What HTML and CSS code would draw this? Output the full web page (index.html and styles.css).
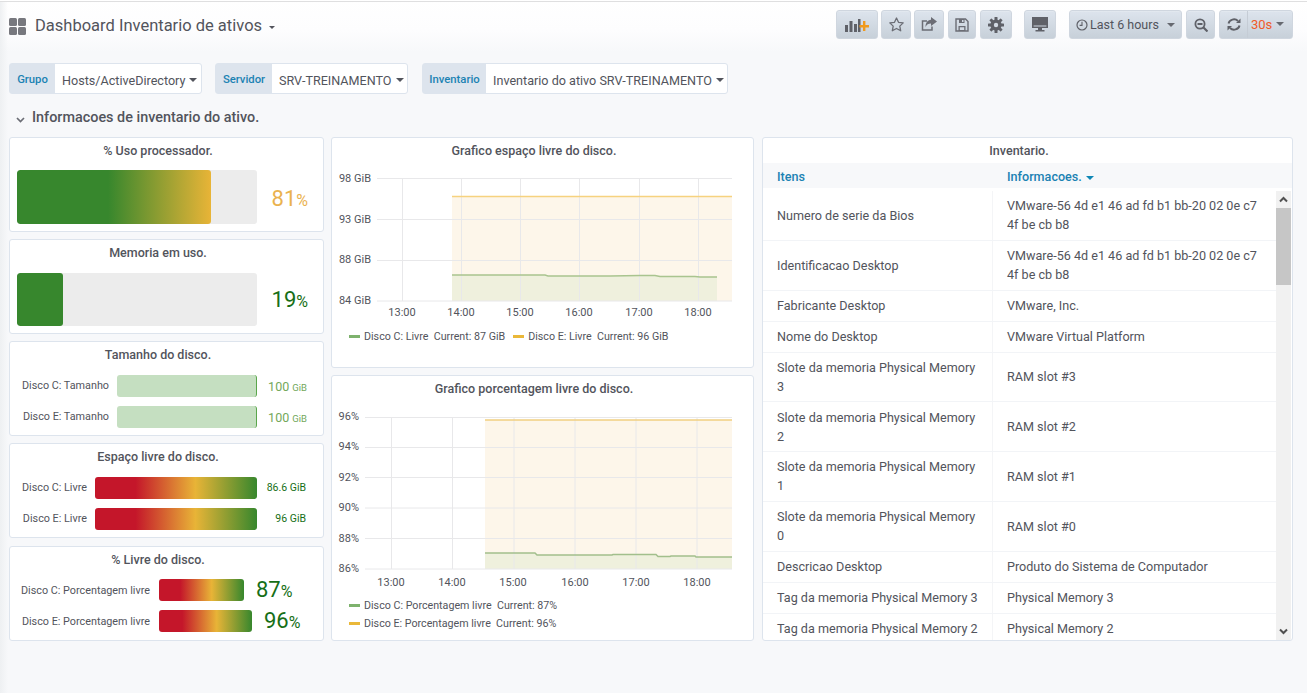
FILE: index.html
```html
<!DOCTYPE html>
<html lang="pt">
<head>
<meta charset="utf-8">
<title>Dashboard Inventario de ativos</title>
<link rel="stylesheet" href="styles.css">
</head>
<body>
<header class="navbar">
  <div class="nav-title">
    <svg class="grid-icon" width="17" height="17" viewBox="0 0 17 17"><rect width="8" height="8" rx="1.5"/><rect x="9" width="8" height="8" rx="1.5"/><rect y="9" width="8" height="8" rx="1.5"/><rect x="9" y="9" width="8" height="8" rx="1.5"/></svg>
    <span class="dash-name">Dashboard Inventario de ativos</span>
    <span class="caret caret-title"></span>
  </div>
  <div class="nav-buttons">
    <button class="btn w42"><svg width="24" height="14" viewBox="0 0 24 14"><path fill="#5f6168" d="M0 7h3v7H0zM4.500 3h3v11h-3zM9 6h3v8H9zM13 1h2.500v13H13z"/><path fill="#f09a1e" d="M18 3h2.400v4H24v2.400h-3.600V13H18V9.400h-3.500V7H18z"/></svg></button>
    <button class="btn w30 ml3"><svg width="15" height="15" viewBox="0 0 15 15"><path fill="none" stroke="#6b6d75" stroke-width="1.300" stroke-linejoin="round" d="M7.500 1l2 4.300 4.700.6-3.400 3.200.9 4.700-4.200-2.300-4.200 2.300.9-4.700L.8 5.900l4.700-.6z"/></svg></button>
    <button class="btn w30 ml3"><svg width="16" height="15" viewBox="0 0 16 15"><path fill="none" stroke="#6b6d75" stroke-width="1.500" d="M11 9.500V13H1.500V4H6"/><path fill="#6b6d75" d="M10 0l6 4.500-6 4.500V6.500C7.500 6.500 5.500 7.500 4.500 10 4.500 6 6.500 3 10 2.800z"/></svg></button>
    <button class="btn w28 ml4"><svg width="14" height="14" viewBox="0 0 14 14"><path fill="none" stroke="#6b6d75" stroke-width="1.400" d="M1 1h9.500L13 3.500V13H1z"/><path fill="#6b6d75" d="M4 1h5.500v4H4zM3.500 8h7v5h-7z"/><path fill="#d3dae3" d="M7 2h1.500v2H7zM4.800 9.200h4.400v2.800H4.800z"/></svg></button>
    <button class="btn w32 ml4"><svg width="16" height="16" viewBox="0 0 16 16"><g fill="#5f6168"><circle cx="8" cy="8" r="5.600"/><rect x="6.500" width="3" height="16" rx=".6"/><rect x="6.500" width="3" height="16" rx=".6" transform="rotate(45 8 8)"/><rect x="6.500" width="3" height="16" rx=".6" transform="rotate(90 8 8)"/><rect x="6.500" width="3" height="16" rx=".6" transform="rotate(135 8 8)"/></g><circle cx="8" cy="8" r="2.200" fill="#d3dae3"/></svg></button>
    <button class="btn w32 ml12"><svg width="16" height="15" viewBox="0 0 16 15"><path fill="none" stroke="#5f6168" stroke-width="1.600" d="M.8 .8h14.400v9.400H.8z"/><path fill="#5f6168" d="M1 1h14v7.500H1zM6 11h4v2h2.500v1.500h-9V13H6z"/></svg></button>
    <button class="btn time ml13"><svg width="12" height="12" viewBox="0 0 12 12"><circle cx="6" cy="6" r="5" fill="none" stroke="#5f6168" stroke-width="1.200"/><path fill="none" stroke="#5f6168" stroke-width="1.100" d="M6 2.800V6.400H3.600"/></svg><span class="time-text">Last 6 hours</span><span class="caret caret-btn"></span></button>
    <button class="btn w29 ml4"><svg width="14" height="14" viewBox="0 0 14 14"><circle cx="6" cy="6" r="4.600" fill="none" stroke="#5f6168" stroke-width="1.800"/><path stroke="#5f6168" stroke-width="2.200" d="M9.500 9.500l4 4M3.500 6h5" fill="none"/></svg></button>
    <div class="btn refresh ml4">
      <span class="refresh-icon"><svg width="14" height="13" viewBox="0 0 14 13"><path fill="none" stroke="#5f6168" stroke-width="1.900" d="M1.500 5.500A5.500 5 0 0 1 11 3M12.500 7.500A5.500 5 0 0 1 3 10"/><path fill="#5f6168" d="M13.500 .5v4.500H9zM.5 12.500V8H5z"/></svg></span>
      <span class="interval">30s</span><span class="caret caret-btn caret-int"></span>
    </div>
  </div>
</header>

<section class="vars">
  <div class="var var-grupo"><span class="var-label">Grupo</span><span class="var-value">Hosts/ActiveDirectory<span class="caret"></span></span></div>
  <div class="var var-servidor"><span class="var-label">Servidor</span><span class="var-value">SRV-TREINAMENTO<span class="caret"></span></span></div>
  <div class="var var-inv"><span class="var-label">Inventario</span><span class="var-value">Inventario do ativo SRV-TREINAMENTO<span class="caret"></span></span></div>
</section>

<h2 class="row-title"><svg width="9" height="6" viewBox="0 0 9 6"><path fill="none" stroke="#6b6d75" stroke-width="1.700" d="M1 1l3.500 3.500L8 1"/></svg>Informacoes de inventario do ativo.</h2>

<main class="grid">
  <div class="col-left">
    <article class="panel p95">
      <h3 class="panel-title">% Uso processador.</h3>
      <div class="gauge-row">
        <div class="track tall"><div class="fill grad-cpu"></div></div>
        <div class="big orange">81<small>%</small></div>
      </div>
    </article>
    <article class="panel p95">
      <h3 class="panel-title">Memoria em uso.</h3>
      <div class="gauge-row gauge-mem">
        <div class="track tall mem"><div class="fill fill-mem"></div></div>
        <div class="big green">19<small>%</small></div>
      </div>
    </article>
    <article class="panel p95">
      <h3 class="panel-title">Tamanho do disco.</h3>
      <div class="bars size">
        <div class="bar-row"><span class="bar-label">Disco C: Tamanho</span><div class="bar bar-size"></div><span class="bar-val lgreen">100 <small>GiB</small></span></div>
        <div class="bar-row"><span class="bar-label">Disco E: Tamanho</span><div class="bar bar-size"></div><span class="bar-val lgreen">100 <small>GiB</small></span></div>
      </div>
    </article>
    <article class="panel p95">
      <h3 class="panel-title">Espaço livre do disco.</h3>
      <div class="bars free">
        <div class="bar-row"><span class="bar-label">Disco C: Livre</span><div class="bar grad-free"></div><span class="bar-val dgreen">86.6 <small>GiB</small></span></div>
        <div class="bar-row"><span class="bar-label">Disco E: Livre</span><div class="bar grad-free"></div><span class="bar-val dgreen">96 <small>GiB</small></span></div>
      </div>
    </article>
    <article class="panel p95 last">
      <h3 class="panel-title">% Livre do disco.</h3>
      <div class="bars pct">
        <div class="bar-row"><span class="bar-label">Disco C: Porcentagem livre</span><div class="bar grad-free b85"></div><span class="pct-val green">87<small>%</small></span></div>
        <div class="bar-row"><span class="bar-label">Disco E: Porcentagem livre</span><div class="bar grad-free b93"></div><span class="pct-val green">96<small>%</small></span></div>
      </div>
    </article>
  </div>

  <div class="col-mid">
    <article class="panel chart1">
      <h3 class="panel-title">Grafico espaço livre do disco.</h3>
      <svg class="chart c1" viewBox="331 163 423 155" width="423" height="155">
        <rect x="452" y="196" width="280" height="105" fill="#fdf6ea"/>
        <path d="M452 301V275H545L548 276H610L640 275.500H655L660 276.500H695L700 277H717V301Z" fill="#eff0dd"/>
        <g class="gl">
          <path d="M377 178.500H732M377 219.500H732M377 260.500H732M377 301H732M402.500 178V301M461.500 178V301M520.500 178V301M579.500 178V301M639.500 178V301M698.500 178V301"/>
        </g>
        <path d="M452 196.500H732" stroke="#f6d27f" stroke-width="1.500" fill="none"/>
        <path d="M452 275H545L548 276H610L640 275.500H655L660 276.500H695L700 277H717" stroke="#a9c48f" stroke-width="1.500" fill="none"/>
        <g class="ylab"><text x="371" y="182">98 GiB</text><text x="371" y="223">93 GiB</text><text x="371" y="263">88 GiB</text><text x="371" y="304">84 GiB</text></g>
        <g class="xlab"><text x="402" y="316">13:00</text><text x="461" y="316">14:00</text><text x="520" y="316">15:00</text><text x="579" y="316">16:00</text><text x="639" y="316">17:00</text><text x="698" y="316">18:00</text></g>
      </svg>
      <div class="legend l1">
        <span class="lg"><i class="sw sw-g"></i>Disco C: Livre&nbsp; Current: 87 GiB</span>
        <span class="lg"><i class="sw sw-y"></i>Disco E: Livre&nbsp; Current: 96 GiB</span>
      </div>
    </article>
    <article class="panel chart2">
      <h3 class="panel-title">Grafico porcentagem livre do disco.</h3>
      <svg class="chart c2" viewBox="331 402 423 188" width="423" height="188">
        <rect x="485" y="420" width="247" height="149" fill="#fdf6ea"/>
        <path d="M485 569V553H535L537 555H612L613 554.500H656L658 556.500H670L671 556H695L696 557H732V569Z" fill="#eff0dd"/>
        <g class="gl">
          <path d="M365 417.500H732M365 447.500H732M365 477.500H732M365 508H732M365 538.500H732M365 569H732M391.500 417V569M452.500 417V569M514 417V569M575 417V569M636 417V569M697 417V569"/>
        </g>
        <path d="M485 420H732" stroke="#f0cf80" stroke-width="1.500" fill="none"/>
        <path d="M485 553H535L537 555H612L613 554.500H656L658 556.500H670L671 556H695L696 557H732" stroke="#a2bf8c" stroke-width="1.500" fill="none"/>
        <g class="ylab"><text x="359" y="420">96%</text><text x="359" y="450">94%</text><text x="359" y="481">92%</text><text x="359" y="511">90%</text><text x="359" y="542">88%</text><text x="359" y="572">86%</text></g>
        <g class="xlab"><text x="391" y="586">13:00</text><text x="452" y="586">14:00</text><text x="513" y="586">15:00</text><text x="575" y="586">16:00</text><text x="636" y="586">17:00</text><text x="697" y="586">18:00</text></g>
      </svg>
      <div class="legend l2">
        <span class="lg"><i class="sw sw-g"></i>Disco C: Porcentagem livre&nbsp; Current: 87%</span>
        <span class="lg"><i class="sw sw-y"></i>Disco E: Porcentagem livre&nbsp; Current: 96%</span>
      </div>
    </article>
  </div>

  <article class="panel table-panel">
    <h3 class="panel-title tt">Inventario.</h3>
    <div class="thead"><span class="c-a">Itens</span><span class="c-b">Informacoes.<span class="caret caret-blue"></span></span></div>
    <div class="tbody-wrap">
      <div class="tbody">
        <div class="tr"><div class="c-a">Numero de serie da Bios</div><div class="c-b">VMware-56 4d e1 46 ad fd b1 bb-20 02 0e c7 4f be cb b8</div></div>
        <div class="tr"><div class="c-a">Identificacao Desktop</div><div class="c-b">VMware-56 4d e1 46 ad fd b1 bb-20 02 0e c7 4f be cb b8</div></div>
        <div class="tr"><div class="c-a">Fabricante Desktop</div><div class="c-b">VMware, Inc.</div></div>
        <div class="tr"><div class="c-a">Nome do Desktop</div><div class="c-b">VMware Virtual Platform</div></div>
        <div class="tr"><div class="c-a">Slote da memoria Physical Memory 3</div><div class="c-b">RAM slot #3</div></div>
        <div class="tr"><div class="c-a">Slote da memoria Physical Memory 2</div><div class="c-b">RAM slot #2</div></div>
        <div class="tr"><div class="c-a">Slote da memoria Physical Memory 1</div><div class="c-b">RAM slot #1</div></div>
        <div class="tr"><div class="c-a">Slote da memoria Physical Memory 0</div><div class="c-b">RAM slot #0</div></div>
        <div class="tr"><div class="c-a">Descricao Desktop</div><div class="c-b">Produto do Sistema de Computador</div></div>
        <div class="tr"><div class="c-a">Tag da memoria Physical Memory 3</div><div class="c-b">Physical Memory 3</div></div>
        <div class="tr"><div class="c-a">Tag da memoria Physical Memory 2</div><div class="c-b">Physical Memory 2</div></div>
      </div>
      <div class="scrollbar">
        <svg class="sb-arrow" width="15" height="17" viewBox="0 0 15 17"><path d="M4 10.500l3.500-3.500 3.500 3.500" fill="none" stroke="#505050" stroke-width="2"/></svg>
        <div class="sb-thumb"></div>
        <svg class="sb-arrow sb-down" width="15" height="17" viewBox="0 0 15 17"><path d="M4 6.500l3.500 3.500 3.500-3.500" fill="none" stroke="#505050" stroke-width="2"/></svg>
      </div>
    </div>
  </article>
</main>
</body>
</html>
```

FILE: styles.css
```css
* { box-sizing: border-box; }
html, body { height: 100%; }
body {
  margin: 0;
  height: 693px;
  overflow: hidden;
  font-family: Roboto, "Liberation Sans", sans-serif;
  font-size: 12.6px;
  color: #52545c;
  background:
    linear-gradient(#fff 0 1px, #dfdfe0 1px 2px, transparent 2px),
    linear-gradient(90deg, #eef0f2, rgba(238,240,242,0) 8px),
    linear-gradient(#fff 0, #fdfdfe 30px, #f7f8fa 52px);
  background-color: #f7f8fa;
}
button { font: inherit; color: inherit; }

.navbar { height: 63px; padding: 10px 14px 0 9px; display: flex; justify-content: space-between; }
.nav-title { display: flex; align-items: center; height: 33px; margin-top: -1px; }
.grid-icon { fill: #77787e; margin-top: 1px; }
.dash-name { font-size: 16.5px; margin-left: 9px; color: #52545c; }
.nav-buttons { display: flex; height: 30px; }
.btn {
  height: 29px; padding: 0; display: flex; align-items: center; justify-content: center;
  background: linear-gradient(#dde4ed, #c7d0d9);
  border: 1px solid #cfd6df; border-radius: 3px; color: #52545c;
  box-shadow: inset 0 1px 0 rgba(255,255,255,.15);
}
.w42 { width: 42px; } .w30 { width: 30px; } .w28 { width: 28px; } .w32 { width: 32px; } .w29 { width: 29px; }
.ml3 { margin-left: 3px; } .ml4 { margin-left: 4px; } .ml12 { margin-left: 12px; } .ml13 { margin-left: 13px; }
.time { width: 113px; justify-content: flex-start; padding-left: 6px; }
.time-text { margin-left: 2px; font-size: 12.5px; }
.refresh { width: 74px; justify-content: flex-start; }
.refresh-icon { width: 28px; height: 100%; display: flex; align-items: center; justify-content: center; border-right: 1px solid #c5ccd5; }
.interval { color: #f05a28; margin-left: 3px; font-size: 13px; }

.caret { display: inline-block; width: 0; height: 0; border: 4px solid transparent; border-top-color: #52545c; border-bottom: 0; margin-left: 3px; vertical-align: 2px; }
.caret-title { margin-left: 7px; margin-top: 4px; border-width: 3px; border-bottom: 0; }
.caret-btn { margin-left: 8px; border-top-color: #666970; }
.caret-int { margin-left: 4px; margin-top: -2px; }
.caret-blue { border-top-color: #0f87b5; margin-left: 4px; vertical-align: 1px; }

.vars { display: flex; height: 31px; padding-left: 9px; }
.var { display: flex; height: 31px; border: 1px solid #dde4ed; border-radius: 3px; background: #fff; }
.var-servidor { margin-left: 13px; } .var-inv { margin-left: 14px; }
.var-grupo { width: 193px; } .var-servidor { width: 193px; } .var-inv { width: 306px; }
.var-label { background: #dde4ed; color: #1b82b3; font-size: 11.3px; font-weight: 500; display: flex; align-items: center; justify-content: center; flex: none; padding-top: 2px; }
.var-grupo .var-label { width: 45px; } .var-servidor .var-label { width: 56px; } .var-inv .var-label { width: 63px; }
.var-value { display: flex; align-items: center; padding: 3px 0 0 7px; white-space: nowrap; font-size: 12.6px; }
.var-value .caret { margin-left: 4px; margin-top: 0; }

.row-title { margin: 14px 0 0 15px; height: 20px; display: flex; align-items: center; font-size: 14.4px; font-weight: 500; color: #52545c; line-height: 20px; }
.row-title svg { margin: 3px 7px 0 1px; }

.grid { display: grid; grid-template-columns: 322px 431px 531px; padding: 9px 0 0 9px; height: 513px; margin: 0; }
.col-left { padding-right: 7px; }
.col-mid { padding-right: 8px; }
.col-left, .col-mid { display: flex; flex-direction: column; gap: 7px; }
.panel { background: #fff; border: 1px solid #dde4ed; border-radius: 3px; min-width: 0; }
.panel-title { margin: 0; text-align: center; font-size: 12.500px; font-weight: 500; line-height: 16px; padding: 5px 17px 0 0; color: #52545c; }
.p95 { height: 95px; }
.last { margin-top: 1px; }

.gauge-row { display: flex; align-items: center; padding: 11px 0 0 7px; }
.gauge-mem { padding-top: 12px; }
.track { width: 240px; height: 54px; background: #ececec; border-radius: 3px; overflow: hidden; flex: none; }
.track.mem { height: 53px; }
.fill { height: 100%; border-radius: 3px; }
.grad-cpu { width: 194px; background: linear-gradient(90deg, #37872d 0, #37872d 47%, #e8b437 100%); }
.fill-mem { width: 46px; background: #37872d; }
.big { width: 51px; text-align: right; font-size: 22px; line-height: 26px; margin-top: 2px; }
.big.orange { margin-top: 5px; }
.big small { font-size: 16px; }
.orange { color: #eab24f; } .green { color: #176f17; }

.bars { padding-top: 12px; display: flex; flex-direction: column; gap: 9px; }
.bars.pct { padding-top: 11px; }
.bar-row { display: flex; align-items: center; height: 22px; }
.bar-label { text-align: right; font-size: 10.8px; white-space: nowrap; flex: none; }
.size .bar-label, .free .bar-label { margin-bottom: 2px; }
.bar { height: 22px; border-radius: 3px; flex: none; }
.size .bar-label { width: 99px; } .size .bar { margin-left: 8px; width: 140px; }
.bar-size { background: #c5dfc1; border-right: 1.500px solid #5aa64b; }
.free .bar-label { width: 77px; } .free .bar { margin-left: 8px; width: 162px; }
.pct .bar-label { width: 140px; } .pct .bar { margin-left: 9px; }
.b85 { width: 85px; } .b93 { width: 93px; }
.grad-free { background: linear-gradient(90deg, #c4162a 0, #c4162a 25%, #e8b437 62%, #37872d 100%); }
.bar-val { flex: 1; text-align: right; padding-right: 16px; }
.lgreen { color: #73a85a; font-size: 12.5px; }
.lgreen small { font-size: 9.500px; }
.dgreen { color: #176f17; font-size: 10.500px; padding-right: 17px; margin-bottom: 1px; }
.dgreen small { font-size: 10.500px; }
.pct-val { font-size: 22px; margin: 2px 0 0 12px; line-height: 26px; }
.pct-val small { font-size: 16px; }

.chart1 { height: 231px; }
.chart2 { height: 266px; }
.chart { display: block; margin-left: -1px; font-size: 11px; }
.c1 { margin-top: 4px; }
.c2 { margin-top: 5px; }
.gl path { stroke: #e8e8ea; stroke-width: 1; fill: none; }
.ylab text { fill: #52545c; text-anchor: end; }
.xlab text { fill: #52545c; text-anchor: middle; }
.legend { font-size: 10.7px; padding-left: 17px; }
.l1 { display: flex; gap: 8px; margin-top: 12px; }
.l2 { display: flex; flex-direction: column; gap: 5px; margin-top: 9px; }
.lg { display: flex; align-items: center; line-height: 13px; white-space: pre; }
.sw { display: inline-block; width: 11px; height: 2.500px; margin-right: 4px; }
.sw-g { background: #7eb26d; }
.sw-y { background: #eab839; }

.table-panel { display: flex; flex-direction: column; overflow: hidden; height: 504px; width: 531px; }
.tt { height: 25px; }
.thead { height: 25px; padding-top: 2px; background: #f7f8fa; display: flex; color: #1b82b3; font-weight: 500; align-items: center; flex: none; }
.c-a { width: 230px; padding-left: 14px; flex: none; }
.c-b { padding-left: 14px; flex: 1; }
.tbody-wrap { display: flex; flex: 1; min-height: 0; margin-top: 3px; }
.tbody { flex: 1; overflow: hidden; }
.tr { display: flex; border-bottom: 1px solid #f2f4f7; line-height: 19px; }
.tr .c-a { border-right: 1px solid #f4f5f7; display: flex; align-items: center; padding-top: 5.200px; padding-bottom: 5.700px; padding-right: 14px; }
.tr .c-b { display: flex; align-items: center; padding-top: 5.200px; padding-bottom: 5.700px; padding-right: 14px; }
.scrollbar { width: 15px; margin-right: 1px; background: #f1f1f1; display: flex; flex-direction: column; flex: none; }
.sb-thumb { height: 77px; background: #c6c6c6; }
.sb-arrow { display: block; flex: none; }
.sb-down { margin-top: auto; }
```
